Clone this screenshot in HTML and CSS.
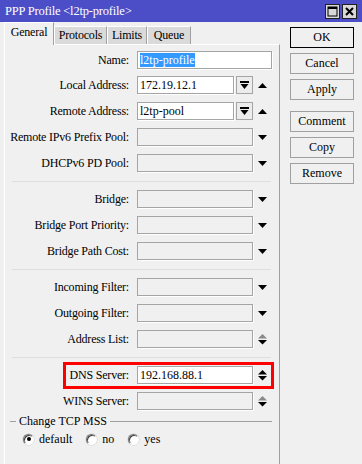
FILE: index.html
```html
<!DOCTYPE html>
<html>
<head>
  <meta charset="UTF-8">
  <title>PPP Profile</title>
  <link rel="stylesheet" href="styles.css">
</head>
<body>
  <div class="titlebar">
    <span class="title-text">PPP Profile &lt;l2tp-profile&gt;</span>
    <div class="title-buttons">
      <span class="title-btn">
        <svg width="11" height="11" viewBox="0 0 11 11"><rect x="1" y="1" width="9" height="9" fill="none" stroke="#000" stroke-width="1"/><rect x="1" y="1" width="9" height="2" fill="#000"/></svg>
      </span>
      <span class="title-btn">
        <svg width="11" height="11" viewBox="0 0 11 11"><path d="M2 2 L9 9 M9 2 L2 9" stroke="#000" stroke-width="2"/></svg>
      </span>
    </div>
  </div>

  <div class="main">
    <div class="left">
      <div class="tabs">
        <div class="tab active tab-general">General</div>
        <div class="tab tab-protocols">Protocols</div>
        <div class="tab tab-limits">Limits</div>
        <div class="tab tab-queue">Queue</div>
      </div>

      <div class="panel">
        <div class="row first">
          <span class="lbl">Name:</span>
          <div class="input white w-full"><span class="selected">l2tp-profile</span></div>
        </div>
        <div class="row">
          <span class="lbl">Local Address:</span>
          <div class="input white w-short">172.19.12.1</div>
          <span class="dd-btn"><svg width="9" height="9" viewBox="0 0 9 9"><rect x="0" y="0" width="9" height="2"/><polygon points="0.5,3 8.5,3 4.5,8"/></svg></span>
          <span class="arrow"><svg width="9" height="5" viewBox="0 0 9 5"><polygon points="0,5 4.5,0 9,5"/></svg></span>
        </div>
        <div class="row">
          <span class="lbl">Remote Address:</span>
          <div class="input white w-short">l2tp-pool</div>
          <span class="dd-btn"><svg width="9" height="9" viewBox="0 0 9 9"><rect x="0" y="0" width="9" height="2"/><polygon points="0.5,3 8.5,3 4.5,8"/></svg></span>
          <span class="arrow"><svg width="9" height="5" viewBox="0 0 9 5"><polygon points="0,5 4.5,0 9,5"/></svg></span>
        </div>
        <div class="row">
          <span class="lbl">Remote IPv6 Prefix Pool:</span>
          <div class="input w-mid"></div>
          <span class="arrow"><svg width="9" height="5" viewBox="0 0 9 5"><polygon points="0,0 9,0 4.5,5"/></svg></span>
        </div>
        <div class="row">
          <span class="lbl">DHCPv6 PD Pool:</span>
          <div class="input w-mid"></div>
          <span class="arrow"><svg width="9" height="5" viewBox="0 0 9 5"><polygon points="0,0 9,0 4.5,5"/></svg></span>
        </div>

        <div class="sep"></div>

        <div class="row">
          <span class="lbl">Bridge:</span>
          <div class="input w-mid"></div>
          <span class="arrow"><svg width="9" height="5" viewBox="0 0 9 5"><polygon points="0,0 9,0 4.5,5"/></svg></span>
        </div>
        <div class="row">
          <span class="lbl">Bridge Port Priority:</span>
          <div class="input w-mid"></div>
          <span class="arrow"><svg width="9" height="5" viewBox="0 0 9 5"><polygon points="0,0 9,0 4.5,5"/></svg></span>
        </div>
        <div class="row">
          <span class="lbl">Bridge Path Cost:</span>
          <div class="input w-mid"></div>
          <span class="arrow"><svg width="9" height="5" viewBox="0 0 9 5"><polygon points="0,0 9,0 4.5,5"/></svg></span>
        </div>

        <div class="sep"></div>

        <div class="row">
          <span class="lbl">Incoming Filter:</span>
          <div class="input w-mid"></div>
          <span class="arrow"><svg width="9" height="5" viewBox="0 0 9 5"><polygon points="0,0 9,0 4.5,5"/></svg></span>
        </div>
        <div class="row">
          <span class="lbl">Outgoing Filter:</span>
          <div class="input w-mid"></div>
          <span class="arrow"><svg width="9" height="5" viewBox="0 0 9 5"><polygon points="0,0 9,0 4.5,5"/></svg></span>
        </div>
        <div class="row">
          <span class="lbl">Address List:</span>
          <div class="input w-mid"></div>
          <span class="arrow"><svg width="9" height="11" viewBox="0 0 9 11"><polygon points="0,4.5 4.5,0 9,4.5" fill="#8a8a8a"/><polygon points="0,6 9,6 4.5,10.5"/></svg></span>
        </div>

        <div class="sep"></div>

        <div class="row dns">
          <span class="lbl">DNS Server:</span>
          <div class="input white w-mid">192.168.88.1</div>
          <span class="arrow"><svg width="9" height="11" viewBox="0 0 9 11"><polygon points="0,4.5 4.5,0 9,4.5"/><polygon points="0,6 9,6 4.5,10.5"/></svg></span>
          <div class="highlight"></div>
        </div>
        <div class="row last">
          <span class="lbl">WINS Server:</span>
          <div class="input w-mid"></div>
          <span class="arrow"><svg width="9" height="11" viewBox="0 0 9 11"><polygon points="0,4.5 4.5,0 9,4.5" fill="#8a8a8a"/><polygon points="0,6 9,6 4.5,10.5"/></svg></span>
        </div>

        <div class="legend">
          <span class="legend-line short"></span>
          <span class="legend-text">Change TCP MSS</span>
          <span class="legend-line"></span>
        </div>
        <div class="radios">
          <span class="radio checked"></span><span class="radio-label">default</span>
          <span class="radio"></span><span class="radio-label">no</span>
          <span class="radio"></span><span class="radio-label">yes</span>
        </div>
      </div>
    </div>

    <div class="actions">
      <button class="btn default">OK</button>
      <button class="btn">Cancel</button>
      <button class="btn">Apply</button>
      <button class="btn spaced">Comment</button>
      <button class="btn">Copy</button>
      <button class="btn">Remove</button>
    </div>
  </div>
</body>
</html>
```

FILE: styles.css
```css
body {
  margin: 0;
  width: 362px;
  height: 464px;
  overflow: hidden;
  background-color: #f0f0f0;
  font-family: "Liberation Serif", serif;
  font-size: 12px;
  color: #000;
}

.titlebar {
  height: 22px;
  background-color: #4b4ec6;
  display: flex;
  align-items: center;
  justify-content: space-between;
  padding: 0 5px;
}

.title-text {
  color: #fff;
  font-size: 12.5px;
  letter-spacing: -0.2px;
}

.title-buttons {
  display: flex;
  gap: 2px;
}

.title-btn {
  width: 15px;
  height: 15px;
  box-sizing: border-box;
  background-color: #d8d8d8;
  border: 1px solid #202020;
  display: flex;
  align-items: center;
  justify-content: center;
}

.main {
  display: flex;
}

.left {
  width: 280px;
}

/* tabs */
.tabs {
  display: flex;
  align-items: flex-end;
  height: 22px;
  padding-left: 4px;
  position: relative;
  z-index: 1;
}

.tab {
  box-sizing: border-box;
  height: 18px;
  line-height: 17px;
  text-align: center;
  letter-spacing: -0.2px;
  background-color: #dadada;
  border-top: 1px solid #fff;
  border-left: 1px solid #fff;
  border-right: 1px solid #a0a0a0;
}

.tab.active {
  height: 23px;
  line-height: 19px;
  margin-bottom: -1px;
  background-color: #f0f0f0;
}

.tab-general { width: 50px; }
.tab-protocols { width: 53px; }
.tab-limits { width: 40px; }
.tab-queue { width: 44px; }

/* panel */
.panel {
  box-sizing: border-box;
  width: 276px;
  height: 442px;
  margin-left: 4px;
  padding-top: 6px;
  border-top: 1px solid #fff;
  border-left: 1px solid #fff;
  border-right: 1px solid #a0a0a0;
  display: flex;
  flex-direction: column;
}

.row {
  display: flex;
  align-items: center;
  height: 18px;
  margin-bottom: 8px;
}

.row.first {
  margin-bottom: 7px;
}

.row.last {
  margin-bottom: 4px;
}

.lbl {
  width: 124px;
  margin-right: 8px;
  text-align: right;
  white-space: nowrap;
  letter-spacing: -0.2px;
}

.input {
  box-sizing: border-box;
  height: 18px;
  line-height: 16px;
  padding: 0 2px;
  border: 1px solid #a5a5a5;
  background-color: #f0f0f0;
  box-shadow: 1px 1px 0 #fff;
  white-space: nowrap;
  overflow: hidden;
}

.input.white {
  background-color: #fff;
}

.w-full { width: 135px; }
.w-short { width: 97px; }
.w-mid { width: 116px; }

.selected {
  background-color: #3399ff;
  color: #fff;
}

.dd-btn {
  box-sizing: border-box;
  width: 17px;
  height: 18px;
  margin-left: 2px;
  border: 1px solid #a5a5a5;
  background-color: #ececec;
  display: flex;
  align-items: center;
  justify-content: center;
}

.arrow {
  width: 13px;
  margin-left: 3px;
  display: flex;
  align-items: center;
  justify-content: center;
}

.sep {
  height: 1px;
  background-color: #dedede;
  margin: 1px 8px 8px 7px;
}

.dns {
  position: relative;
}

.highlight {
  position: absolute;
  left: 58px;
  right: 5px;
  top: -4px;
  bottom: -5px;
  border: 3px solid #f00;
}

/* Change TCP MSS group */
.legend {
  display: flex;
  align-items: center;
  height: 14px;
}

.legend-line {
  flex: 1;
  height: 1px;
  background-color: #a0a0a0;
  margin-right: 7px;
}

.legend-line.short {
  flex: none;
  width: 6px;
  margin-left: 5px;
  margin-right: 0;
}

.legend-text {
  padding: 0 3px;
}

.radios {
  display: flex;
  align-items: center;
  height: 14px;
  margin-top: 4px;
  padding-left: 18px;
}

.radio {
  box-sizing: border-box;
  width: 11px;
  height: 11px;
  border-radius: 50%;
  background-color: #fff;
  border: 1px solid #fff;
  border-top-color: #7a7a7a;
  border-left-color: #7a7a7a;
  box-shadow: inset 1px 1px 0 #404040, 0 0 0 0.5px #c8c8c8;
  margin-right: 5px;
  display: flex;
  align-items: center;
  justify-content: center;
}

.radio.checked::after {
  content: "";
  width: 4px;
  height: 4px;
  border-radius: 50%;
  background-color: #000;
}

.radio-label {
  margin-right: 14px;
}

/* right buttons */
.actions {
  display: flex;
  flex-direction: column;
  margin-left: 10px;
  padding-top: 5px;
}

.btn {
  box-sizing: border-box;
  width: 64px;
  height: 21px;
  margin: 0 0 5px 0;
  padding: 0;
  border: 1px solid #a0a0a0;
  background-color: #f0f0f0;
  font-family: "Liberation Serif", serif;
  font-size: 12px;
  color: #000;
}

.btn.default {
  border-color: #000;
}

.btn.spaced {
  margin-top: 6px;
}
```
